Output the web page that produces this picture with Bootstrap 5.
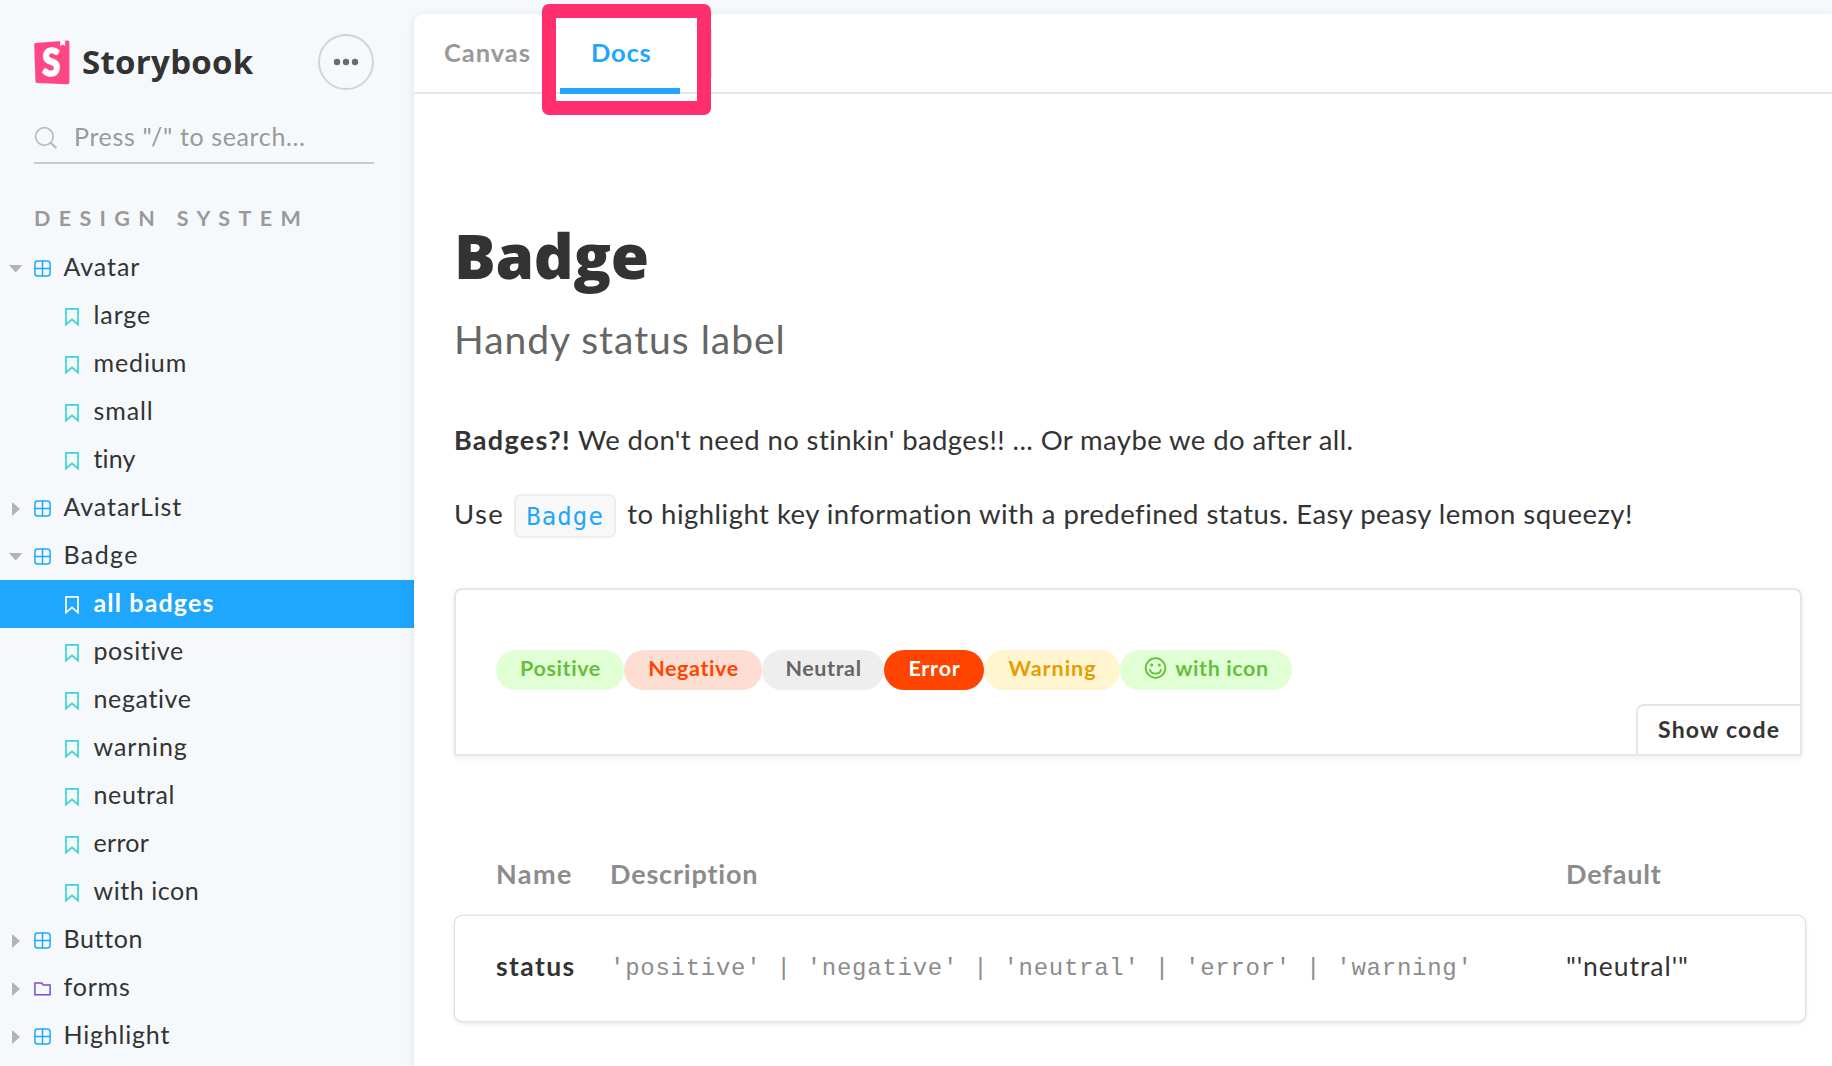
<!DOCTYPE html>
<html lang="en">
<head>
<meta charset="utf-8">
<meta name="viewport" content="width=device-width, initial-scale=1">
<title>Storybook - Badge</title>
<link href="https://cdn.jsdelivr.net/npm/bootstrap@5.3.0/dist/css/bootstrap.min.css" rel="stylesheet">
<style>
:root{--ink:#333;--blue:#1ea7fd;--line:#e6e6e6}
body{font-family:Lato,"Open Sans",sans-serif;color:var(--ink);background:#f6f9fc;height:1066px;overflow:hidden;font-variant-ligatures:none}
svg{display:block;flex:none}
/* letter spacing steps */
.t2{letter-spacing:.15px!important}.t3{letter-spacing:.3px!important}.t5{letter-spacing:.55px!important}.t6{letter-spacing:.62px!important}
.t8{letter-spacing:.8px!important}.t9{letter-spacing:.95px!important}.t11{letter-spacing:1.15px!important}.t14{letter-spacing:1.4px!important}.t16{letter-spacing:1.6px!important}

/* sidebar */
.side{width:414px}
.side-head{padding:34px 40px 0 34px;height:90px}
.logo{overflow:visible}
.wordmark{font:700 33px/40px "Open Sans",sans-serif;letter-spacing:.3px;margin-left:12px}
.more-btn{width:56px;height:56px;border:2px solid #d2d5d8;background:transparent}
.search-box{margin:26px 40px 0 34px;height:48px;border-bottom:2px solid #c8cbcf;color:#999;font-size:25px;letter-spacing:.63px;line-height:40px;padding-bottom:3px}
.search-box svg{margin:0 16px 0 0}
.search-box span{padding-bottom:3px}
.group-title{margin:35px 0 0 34px;height:45px;font-size:21.5px;line-height:38px;font-weight:700;letter-spacing:8.36px;color:#999}
.tree a{height:48px;padding-bottom:4px;font-size:25px;letter-spacing:.9px;color:var(--ink);text-decoration:none;line-height:44px}
.tree svg{position:relative;top:2.5px}
.tree .arrow{width:16px;margin-left:8px;color:#b3b3b3}
.tree .kind{margin:0 13px 0 9.5px}
.tree .story{padding-left:65px}
.tree .story svg{margin-right:14.5px;color:#37d5d3}
.tree .chosen,.tree .chosen svg{color:#fff!important}
.tree .chosen{background:var(--blue);font-weight:700}

/* main panel */
.panel{margin-top:14px;background:#fff;border-top-left-radius:10px;box-shadow:0 2px 10px rgba(0,0,0,.1);min-width:0}
.tabs{height:80px;border-bottom:2px solid var(--line);padding-left:30px;font-size:25.5px;font-weight:700}
.tab{height:80px;padding:0 31px;line-height:77px;letter-spacing:.8px;border-bottom:6px solid transparent}
.tab-canvas{color:#999;width:116px;padding:0;letter-spacing:.95px}
.tab-docs{color:var(--blue);border-color:var(--blue);width:120px}
.tab-sep{width:1px;height:48px;background:var(--line);margin:16px 0 0 31px}
.callout-frame{position:absolute;left:128px;top:-10.5px;width:169px;height:111.5px;border:14px solid #ff2e6c;border-radius:7px}
.docs{padding:124px 27px 0 40px}
.docs h1{font:800 62px/72px "Open Sans",sans-serif;letter-spacing:-.3px;margin:0;padding-top:1px;height:72px}
.sub{font-size:39px;line-height:48px;letter-spacing:.98px;color:#666;margin:25px 0 0}
.docs p{font-size:27.5px;line-height:48px;letter-spacing:.4px;margin:53px 0 0;white-space:nowrap}
.docs p+p{margin-top:26px;letter-spacing:.48px}
.docs p b{font-size:27px;letter-spacing:1.3px}
.inline-code{font:24px/42px "DejaVu Sans Mono",monospace;letter-spacing:1.1px;color:var(--blue);background:#f8f8f8;border:2px solid #eee;border-radius:6px;width:102px;height:44px;padding-left:10px;margin:3px 11px 0 10px}
.preview{height:168px;width:1348px;margin-top:50px;border:2px solid var(--line);border-radius:8px 8px 0 0;box-shadow:0 2px 6px rgba(0,0,0,.07);padding:60px 0 0 40px}
.pill{height:40px;border-radius:20px;font-size:21.5px;font-weight:700;letter-spacing:.6px;line-height:37px;padding-left:1px}
.pos{color:#66bf3c;background:#e1ffd4}.neg{color:#ff4400;background:#feded2}.neu{color:#666;background:#eee}
.err{color:#fff;background:#ff4400}.warn{color:#e69d00;background:#fff5cf}
.w1{width:128px}.w2{width:138px}.w3{width:122px}.w4{width:100px}.w5{width:136px}.w6{width:172px}
.smile{margin-top:7px}
.show-code{position:absolute;right:0;bottom:0;width:164px;height:50px;border:2px solid var(--line);border-width:2px 0 0 2px;border-radius:8px 0 0 0;font-size:23px;line-height:45px;font-weight:700;letter-spacing:1.2px;color:var(--ink);background:#fff;padding:0 0 2px 20px}
.props{display:grid;grid-template-columns:114px 956px 1fr;padding-left:41px;width:1350px;margin-left:1px}
.props-head{margin-top:98px;height:40px;font-size:27px;line-height:40px;font-weight:700;color:#8c8c8c;letter-spacing:.82px}
.props-row{margin-top:22px;height:105px;border-radius:7px;line-height:101px;font-size:26.5px;box-shadow:0 0 0 1.2px #e2e2e2,0 2px 5px rgba(0,0,0,.13)}
.props-row code{font:24px/105px "Liberation Mono",monospace;letter-spacing:.73px;color:#8c8c8c;white-space:nowrap}
</style>
</head>
<body>
<svg width="0" height="0" class="position-absolute" aria-hidden="true">
<symbol id="component" viewBox="0 0 17 17"><rect x=".9" y=".9" width="15.2" height="15.2" rx="2.8" fill="none" stroke="#1ea7fd" stroke-width="1.5"/><path d="M8.5 1v15M1 8.5h15" stroke="#1ea7fd" stroke-width="1.5"/></symbol>
<symbol id="bookmark" viewBox="0 0 14 18"><path d="M1 .9h12v15.7l-6-5.3-6 5.3z" fill="none" stroke="currentColor" stroke-width="1.7"/></symbol>
<symbol id="folder" viewBox="0 0 17 14"><path d="M.9 1h6.8l1.6 2h6.8v9.8H.9z" fill="none" stroke="#774cd7" stroke-width="1.5"/></symbol>
<symbol id="open" viewBox="0 0 16 16"><path d="M1 4h13.4L7.7 11.6z" fill="currentColor"/></symbol>
<symbol id="shut" viewBox="0 0 16 16"><path d="M4 1v14l8-7z" fill="currentColor"/></symbol>
</svg>
<div class="d-flex h-100">
<aside class="side flex-shrink-0">
  <div class="side-head d-flex align-items-center">
    <svg class="logo" width="36" height="45" viewBox="0 0 36 45"><path d="M1.8 2.9 33.6.6Q35.4.5 35.4 2.4V42.5q0 1.9-1.9 1.8L3.2 43.1q-1.6-.1-1.7-1.7L.2 4.7Q.1 3 1.8 2.9z" fill="#ff4785"/><path d="M26.2 1.1 31.2.8v5.5L28.8 4.5 26 6.300z" fill="#fff"/><text transform="translate(8.3 35.6) scale(.86 1)" font-family="Lato, sans-serif" font-weight="900" font-size="38" fill="#fff" stroke="#fff" stroke-width="1.5">S</text></svg>
    <div class="wordmark">Storybook</div>
    <button class="more-btn rounded-circle ms-auto p-0 d-flex align-items-center justify-content-center" aria-label="Menu"><svg width="26" height="8" viewBox="0 0 26 8" fill="#6b6b6b"><circle cx="4" cy="4" r="3.2"/><circle cx="13" cy="4" r="3.2"/><circle cx="22" cy="4" r="3.2"/></svg></button>
  </div>
  <div class="search-box d-flex align-items-center"><svg width="24" height="24" viewBox="0 0 24 24" fill="none" stroke="#b9bbbe" stroke-width="1.7"><circle cx="10.4" cy="10.5" r="8.8"/><path d="m16.7 16.7 5.7 5.4" stroke-width="2.2"/></svg><span>Press "/" to search...</span></div>
  <div class="group-title">DESIGN SYSTEM</div>
  <nav class="tree">
    <a href="#" class="d-flex align-items-center"><svg class="arrow" height="16"><use href="#open"/></svg><svg class="kind" width="17" height="17"><use href="#component"/></svg>Avatar</a>
    <a href="#" class="story d-flex align-items-center"><svg width="14" height="18"><use href="#bookmark"/></svg>large</a>
    <a href="#" class="story d-flex align-items-center"><svg width="14" height="18"><use href="#bookmark"/></svg>medium</a>
    <a href="#" class="story d-flex align-items-center"><svg width="14" height="18"><use href="#bookmark"/></svg>small</a>
    <a href="#" class="story d-flex align-items-center t2"><svg width="14" height="18"><use href="#bookmark"/></svg>tiny</a>
    <a href="#" class="d-flex align-items-center"><svg class="arrow" height="16"><use href="#shut"/></svg><svg class="kind" width="17" height="17"><use href="#component"/></svg>AvatarList</a>
    <a href="#" class="d-flex align-items-center t14"><svg class="arrow" height="16"><use href="#open"/></svg><svg class="kind" width="17" height="17"><use href="#component"/></svg>Badge</a>
    <a href="#" class="story chosen d-flex align-items-center t11"><svg width="14" height="18"><use href="#bookmark"/></svg>all badges</a>
    <a href="#" class="story d-flex align-items-center t5"><svg width="14" height="18"><use href="#bookmark"/></svg>positive</a>
    <a href="#" class="story d-flex align-items-center t6"><svg width="14" height="18"><use href="#bookmark"/></svg>negative</a>
    <a href="#" class="story d-flex align-items-center"><svg width="14" height="18"><use href="#bookmark"/></svg>warning</a>
    <a href="#" class="story d-flex align-items-center t6"><svg width="14" height="18"><use href="#bookmark"/></svg>neutral</a>
    <a href="#" class="story d-flex align-items-center t3"><svg width="14" height="18"><use href="#bookmark"/></svg>error</a>
    <a href="#" class="story d-flex align-items-center t5"><svg width="14" height="18"><use href="#bookmark"/></svg>with icon</a>
    <a href="#" class="d-flex align-items-center t6"><svg class="arrow" height="16"><use href="#shut"/></svg><svg class="kind" width="17" height="17"><use href="#component"/></svg>Button</a>
    <a href="#" class="d-flex align-items-center t8"><svg class="arrow" height="16"><use href="#shut"/></svg><svg class="kind" width="17" height="14"><use href="#folder"/></svg>forms</a>
    <a href="#" class="d-flex align-items-center t8"><svg class="arrow" height="16"><use href="#shut"/></svg><svg class="kind" width="17" height="17"><use href="#component"/></svg>Highlight</a>
  </nav>
</aside>
<main class="panel flex-grow-1 position-relative">
  <div class="tabs d-flex">
    <div class="tab tab-canvas">Canvas</div>
    <div class="tab tab-docs">Docs</div>
    <div class="tab-sep"></div>
  </div>
  <div class="callout-frame"></div>
  <div class="docs">
    <h1>Badge</h1>
    <div class="sub">Handy status label</div>
    <p><b>Badges?!</b> We don't need no stinkin' badges!! ... Or maybe we do after all.</p>
    <p class="d-flex align-items-center"><span class="t14">Use</span><span class="inline-code">Badge</span><span>to highlight key information with a predefined status. Easy peasy lemon squeezy!</span></p>
    <div class="preview position-relative d-flex align-items-start">
      <span class="pill pos w1 text-center">Positive</span><span class="pill neg w2 text-center">Negative</span><span class="pill neu w3 text-center">Neutral</span><span class="pill err w4 text-center t8">Error</span><span class="pill warn w5 text-center t9">Warning</span><span class="pill pos w6 d-flex justify-content-center"><svg class="smile me-2" width="23" height="23" viewBox="0 0 23 23" fill="none" stroke="#66bf3c" stroke-width="1.8"><circle cx="11.5" cy="11" r="9.8"/><path d="M6 12.8c1.2 5.2 9.8 5.2 11 0" stroke-linecap="round"/><circle cx="7.7" cy="8" r="1.5" fill="#66bf3c" stroke="none"/><circle cx="15.3" cy="8" r="1.5" fill="#66bf3c" stroke="none"/></svg>with icon</span>
      <button class="show-code text-start">Show code</button>
    </div>
    <div class="props props-head"><span class="t14">Name</span><span>Description</span><span>Default</span></div>
    <div class="props props-row"><b class="t14">status</b><code>'positive' | 'negative' | 'neutral' | 'error' | 'warning'</code><span class="t9">"'neutral'"</span></div>
  </div>
</main>
</div>
<script src="https://cdn.jsdelivr.net/npm/bootstrap@5.3.0/dist/js/bootstrap.bundle.min.js"></script>
</body>
</html>
